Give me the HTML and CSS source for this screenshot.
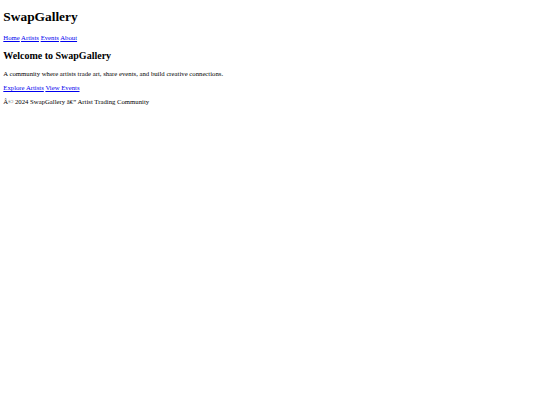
FILE: index.html
```html
<!DOCTYPE html>
<html lang="en">
<head>
<meta charset="utf-8">
<title>SwapGallery</title>
<link rel="stylesheet" href="styles.css">
</head>
<body>
<header class="site-header">
  <h1 class="site-title">SwapGallery</h1>
  <nav class="site-nav">
    <a href="#">Home</a>
    <a href="#">Artists</a>
    <a href="#">Events</a>
    <a href="#">About</a>
  </nav>
</header>
<main class="site-main">
  <h2 class="welcome-title">Welcome to SwapGallery</h2>
  <p class="text">A community where artists trade art, share events, and build creative connections.</p>
  <p class="text">
    <a href="#">Explore Artists</a>
    <a href="#">View Events</a>
  </p>
</main>
<footer class="site-footer">
  <p class="text">Â© 2024 SwapGallery â€” Artist Trading Community</p>
</footer>
</body>
</html>
```

FILE: styles.css
```css
html {
  background: #ffffff;
}
body {
  margin: 3.32px;
  font-family: "Liberation Serif", "Times New Roman", serif;
  font-size: 6.72px;
  line-height: 1.15;
  color: #000000;
}
.site-title {
  font-size: 13.4px;
  font-weight: bold;
  margin: 5.6px 0 9.9px;
  line-height: 1.15;
}
.site-nav {
  margin: 0;
}
.welcome-title {
  font-size: 10px;
  font-weight: bold;
  margin: 8.27px 0;
  line-height: 1.15;
}
.text {
  margin: 6.5px 0;
}
a {
  color: #0000ee;
  text-decoration: underline;
}
```
